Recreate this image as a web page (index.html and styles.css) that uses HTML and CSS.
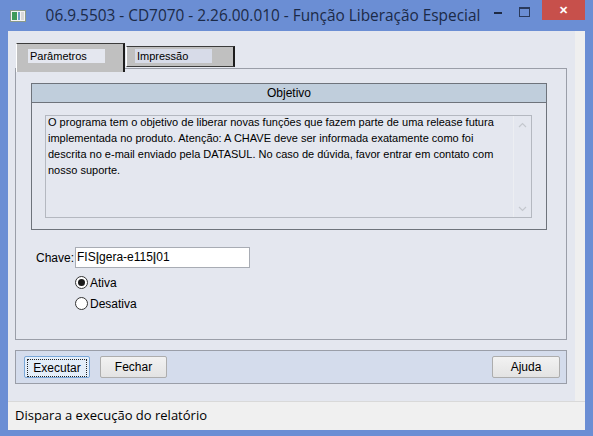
FILE: index.html
```html
<!DOCTYPE HTML>
<html>
<head>
    <meta charset="utf-8" />
    <title>Função Liberação Especial</title>
    <link rel="stylesheet" href="styles.css">
</head>
<body>

<div class="window">
    <div class="titlebar">
        <svg class="app-icon" width="16" height="12" viewBox="0 0 16 12">
            <rect x="0.5" y="0.5" width="15" height="11" fill="#f4f4f4" stroke="#8a9a8a"/>
            <rect x="2" y="2" width="5" height="8" fill="#3f9a5a"/>
            <rect x="8" y="2" width="2" height="8" fill="#6fa0c8"/>
            <rect x="11" y="2" width="3" height="8" fill="#d8d8d8"/>
        </svg>
        <div class="title">06.9.5503 - CD7070 - 2.26.00.010 - Função Liberação Especial</div>
        <div class="win-btns">
            <span class="win-min"></span>
            <span class="win-max"></span>
            <span class="win-close">&#x2715;</span>
        </div>
    </div>

    <div class="client">
        <div class="client-body">
            <div class="main">
                <div class="tabs">
                    <div class="tab active"><span class="tab-label">Parâmetros</span></div>
                    <div class="tab"><span class="tab-label">Impressão</span></div>
                </div>
                <div class="tab-panel">
                    <div class="frame">
                        <div class="frame-header">Objetivo</div>
                        <div class="memo">
                            <div class="memo-text">O programa tem o objetivo de liberar novas funções que fazem parte de uma release futura implementada no produto. Atenção: A CHAVE deve ser informada exatamente como foi descrita no e-mail enviado pela DATASUL. No caso de dúvida, favor entrar em contato com nosso suporte.</div>
                            <div class="memo-scroll">
                                <svg width="9" height="6" viewBox="0 0 9 6"><path d="M1 5 L4.5 1.5 L8 5" fill="none" stroke="#c4c8ce" stroke-width="1.2"/></svg>
                                <svg width="9" height="6" viewBox="0 0 9 6"><path d="M1 1 L4.5 4.5 L8 1" fill="none" stroke="#c4c8ce" stroke-width="1.2"/></svg>
                            </div>
                        </div>
                    </div>

                    <div class="field-row">
                        <label class="field-label">Chave:</label>
                        <div class="input">FIS<b>|</b>gera-e115<b>|</b>01</div>
                    </div>
                    <div class="radio-row first">
                        <span class="radio checked"></span>Ativa
                    </div>
                    <div class="radio-row">
                        <span class="radio"></span>Desativa
                    </div>
                </div>

                <div class="button-bar">
                    <button class="btn btn-default"><span>Executar</span></button>
                    <button class="btn">Fechar</button>
                    <button class="btn btn-right">Ajuda</button>
                </div>
            </div>
            <div class="side-strip"></div>
        </div>
        <div class="status">Dispara a execução do relatório</div>
    </div>
</div>

</body>
</html>
```

FILE: styles.css
```css
body {
    margin: 0;
    background: #6b8ed4;
    font-family: "Liberation Sans", Arial, sans-serif;
    font-size: 11px;
    color: #000;
}
.window {
    width: 593px;
    height: 436px;
    display: flex;
    flex-direction: column;
}
.titlebar {
    height: 31px;
    display: flex;
    align-items: flex-start;
}
.app-icon {
    margin: 10px 0 0 10px;
}
.title {
    flex: 1;
    text-align: center;
    font-family: "Open Sans", "Noto Sans", sans-serif;
    font-size: 15.4px;
    color: #1b2a47;
    line-height: 32px;
    margin-left: 6px;
}
.win-btns {
    display: flex;
    align-items: flex-start;
    margin-right: 8px;
}
.win-min {
    width: 8px;
    height: 2px;
    background: #1e2a44;
    margin: 12px 17px 0 0;
}
.win-max {
    width: 9px;
    height: 7px;
    border: 1px solid #2a3a5c;
    border-top-width: 2px;
    margin: 7px 12px 0 0;
}
.win-close {
    width: 43px;
    height: 20px;
    background: #c7504b;
    color: #fff;
    font-size: 11px;
    font-weight: bold;
    text-align: center;
    line-height: 20px;
}
.client {
    flex: 1;
    margin: 0 8px 6px 8px;
    background: #f0f0f0;
    display: flex;
    flex-direction: column;
}
.client-body {
    display: flex;
    height: 370px;
}
.main {
    flex: 1;
    background: #e4e7ef;
    padding: 12px 8px 0 7px;
}
.side-strip {
    width: 10px;
    background: #efefef;
}
.tabs {
    display: flex;
    align-items: flex-start;
    height: 25px;
    padding-left: 1px;
    position: relative;
    z-index: 1;
}
.tab {
    width: 109px;
    height: 21px;
    margin-top: 3px;
    margin-left: 1px;
    background: #c0c0c0;
    border-top: 1px solid #3c3c3c;
    border-left: 1px solid #ffffff;
    border-right: 2px solid #1c1c1c;
    border-bottom: 1px solid #3c3c3c;
    padding: 2px 0 0 8px;
    box-sizing: border-box;
}
.tab.active {
    margin-top: 0;
    margin-left: 0;
    height: 29px;
    border-bottom: none;
    padding-top: 5px;
    padding-left: 11px;
}
.tab-label {
    display: inline-block;
    width: 75px;
    height: 14px;
    line-height: 14px;
    padding-left: 2px;
    background: #d7dbe8;
}
.tab.active .tab-label {
    background: #e4e7ef;
}
.tab-panel {
    height: 272px;
    box-sizing: border-box;
    border: 1px solid #9a9ea8;
    padding: 14px 19px 0 15px;
}
.frame {
    border: 1px solid #6e737b;
    height: 147px;
    box-sizing: border-box;
}
.frame-header {
    height: 18px;
    line-height: 18px;
    background: #c0cedc;
    border-bottom: 1px solid #6e737b;
    text-align: center;
    font-size: 12px;
}
.memo {
    margin: 12px 14px 0 13px;
    height: 103px;
    box-sizing: border-box;
    border: 1px solid #b4b8c0;
    display: flex;
}
.memo-text {
    flex: 1;
    padding: 0 8px 0 2px;
    margin-top: -2px;
    line-height: 16px;
}
.memo-scroll {
    width: 17px;
    border-left: 1px solid #eceef2;
    display: flex;
    flex-direction: column;
    justify-content: space-between;
    align-items: center;
    padding: 6px 0 5px;
}
.field-row {
    display: flex;
    align-items: center;
    margin-top: 17px;
}
.field-label {
    width: 43px;
    text-align: right;
    padding-right: 1px;
    font-size: 12px;
}
.input {
    width: 175px;
    height: 21px;
    box-sizing: border-box;
    border: 1px solid #a8acb4;
    background: #fff;
    line-height: 19px;
    padding-left: 1px;
    font-size: 12px;
}
.input b {
    font-weight: bold;
    color: #333;
}
.radio-row {
    display: flex;
    align-items: center;
    height: 21px;
    margin-left: 44px;
    font-size: 12px;
}
.radio-row.first {
    margin-top: 4px;
}
.radio {
    width: 11px;
    height: 11px;
    border: 1px solid #333;
    border-radius: 50%;
    background: #fff;
    margin-right: 2px;
    position: relative;
}
.radio.checked::after {
    content: "";
    position: absolute;
    left: 2px;
    top: 2px;
    width: 7px;
    height: 7px;
    border-radius: 50%;
    background: #1a1a1a;
}
.button-bar {
    margin-top: 10px;
    height: 34px;
    box-sizing: border-box;
    border: 1px solid #9a9ea8;
    background: #d4dcec;
    display: flex;
    align-items: center;
    padding: 0 6px 0 8px;
}
.btn {
    height: 22px;
    width: 67px;
    margin-right: 10px;
    font-family: "Liberation Sans", Arial, sans-serif;
    font-size: 12px;
    color: #000;
    border: 1px solid #adadad;
    border-radius: 2px;
    background: linear-gradient(#f2f2f2, #e3e3e3);
    padding: 0;
}
.btn-default {
    width: 66px;
    border-color: #7aa7d8;
    background: #e4eef9;
    padding: 2px;
}
.btn-default span {
    display: block;
    height: 16px;
    line-height: 16px;
    border: 1px dotted #222;
}
.btn-right {
    margin-left: auto;
    margin-right: 0;
    width: 68px;
}
.status {
    border-top: 1px solid #d9d9d9;
    flex: 1;
    font-family: "Open Sans", "Noto Sans", sans-serif;
    font-size: 13px;
    line-height: 26px;
    padding-left: 7px;
    color: #000;
}
```
